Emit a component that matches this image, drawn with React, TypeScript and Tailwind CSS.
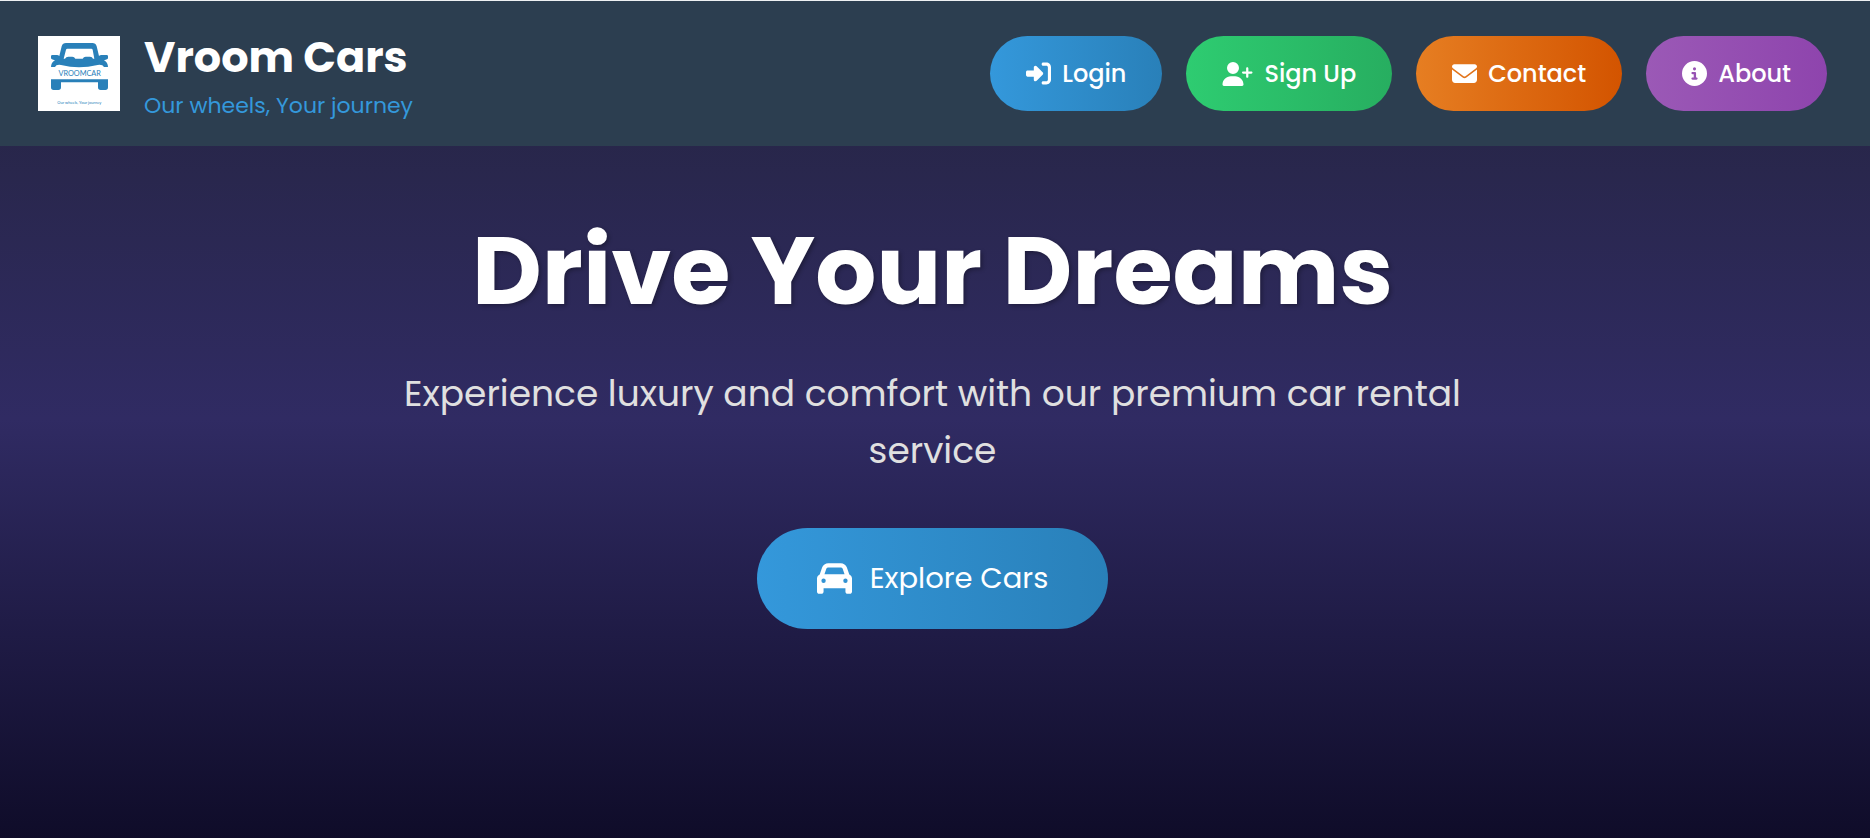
import type { ReactNode } from "react";
import {
  FaCar,
  FaCircleInfo,
  FaEnvelope,
  FaRightToBracket,
  FaUserPlus,
} from "react-icons/fa6";

function Logo() {
  return (
    <svg
      viewBox="0 0 246 225"
      className="h-[75px] w-[82px] shrink-0 bg-white"
      role="img"
      aria-label="Vroomcar logo"
    >
      <rect width="246" height="225" fill="#ffffff" />
      <g fill="#2980b9">
        <path
          fillRule="evenodd"
          d="M39 61 Q39 57 43 57 L57 57 Q61 57 64 60 L71 31 Q74 21 84 21 L163 21 Q173 21 176 31 L183 60 Q186 57 190 57 L206 57 Q210 57 210 61 L210 66 Q210 70 198 73 Q210 80 210 93 L198 93 Q194 85 179 87 Q150 94 123 94 Q97 94 69 87 Q54 85 51 93 L39 93 Q39 80 51 73 Q39 70 39 66 Z M88 38 L160 38 Q163 38 164 41 L169 68 L165 68 Q163 62 156 62 L143 62 Q137 62 134 68 L112 68 Q109 62 103 62 L91 62 Q84 62 81 68 L77 68 L84 41 Q85 38 88 38 Z"
        />
        <path d="M39 130 H210 V154 Q210 162 202 162 H188 Q180 162 180 154 V139 H69 V154 Q69 162 61 162 H47 Q39 162 39 154 Z" />
        <text
          x="125"
          y="120"
          textAnchor="middle"
          fontFamily="Lato, sans-serif"
          fontSize="22"
        >
          VROOMCAR
        </text>
        <text
          x="124"
          y="203"
          textAnchor="middle"
          fontFamily="Lato, sans-serif"
          fontSize="12"
        >
          Our wheels, Your journey
        </text>
      </g>
    </svg>
  );
}

type NavButtonProps = {
  href: string;
  icon: ReactNode;
  label: string;
  color: string;
};

function NavButton({ href, icon, label, color }: NavButtonProps) {
  return (
    <a
      href={href}
      className={`flex h-[75px] items-center gap-[11px] rounded-full px-9 text-2xl font-medium text-white ${color}`}
    >
      {icon}
      <span>{label}</span>
    </a>
  );
}

export default function App() {
  return (
    <div className="flex min-h-screen flex-col bg-linear-to-b/srgb from-[#24243e] via-[#302b63] to-[#0f0c29] font-[Poppins,Inter,sans-serif]">
      <header className="flex items-center justify-between border-t border-[#eef1f3] bg-[#2c3e50] py-6 pr-[43px] pl-[38px]">
        <div className="flex items-center gap-6">
          <Logo />
          <div className="flex flex-col">
            <span className="text-[43px] leading-[64px] font-bold text-white">
              Vroom Cars
            </span>
            <span className="text-[22px] leading-[33px] text-[#3498db]">
              Our wheels, Your journey
            </span>
          </div>
        </div>
        <nav className="flex items-center gap-6">
          <NavButton
            href="#login"
            label="Login"
            icon={<FaRightToBracket className="size-[25px]" />}
            color="bg-[linear-gradient(90deg,#3498db,#2980b9)]"
          />
          <NavButton
            href="#signup"
            label="Sign Up"
            icon={<FaUserPlus className="h-6 w-[31px]" />}
            color="bg-[linear-gradient(90deg,#2ecc71,#27ae60)]"
          />
          <NavButton
            href="#contact"
            label="Contact"
            icon={<FaEnvelope className="size-[25px]" />}
            color="bg-[linear-gradient(90deg,#e67e22,#d35400)]"
          />
          <NavButton
            href="#about"
            label="About"
            icon={<FaCircleInfo className="size-[25px]" />}
            color="bg-[linear-gradient(90deg,#9b59b6,#8e44ad)]"
          />
        </nav>
      </header>

      <main className="flex flex-col items-center pt-[66px] pr-[53px] pl-12 text-center">
        <h1 className="text-[96px] leading-[118px] font-bold text-white [text-shadow:2px_2px_4px_rgba(0,0,0,0.3)]">
          Drive Your Dreams
        </h1>
        <p className="mt-[35px] max-w-[1120px] text-4xl leading-[57px] text-[#e0e0e0]">
          Experience luxury and comfort with our premium car rental service
        </p>
        <a
          href="#cars"
          className="mt-[49px] flex h-[101px] items-center gap-[18px] rounded-full bg-[linear-gradient(90deg,#3498db,#2980b9)] px-[60px] text-[29px] text-white"
        >
          <FaCar className="size-[35px]" />
          <span>Explore Cars</span>
        </a>
      </main>
    </div>
  );
}
